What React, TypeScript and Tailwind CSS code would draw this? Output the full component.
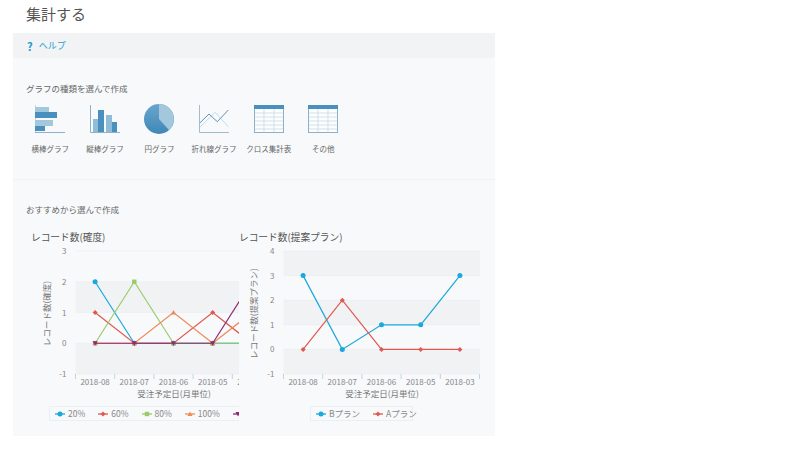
import type { ReactNode } from "react"

type Series = { name: string; color: string; values: number[]; marker: "circle" | "diamond" | "square" | "triangle" | "down" }

const chartA: Series[] = [
  { name: "20%", color: "#1ba8dc", values: [2, 0, 0, 0, 0], marker: "circle" },
  { name: "60%", color: "#e0584f", values: [1, 0, 0, 1, 0], marker: "diamond" },
  { name: "80%", color: "#9bca6a", values: [0, 2, 0, 0, 0], marker: "square" },
  { name: "100%", color: "#f08a55", values: [0, 0, 1, 0, 1], marker: "triangle" },
  // label is off the edge of the panel in the picture
  { name: "", color: "#8e2a72", values: [0, 0, 0, 0, 2], marker: "down" },
]

const chartB: Series[] = [
  { name: "Bプラン", color: "#1ba8dc", values: [3, 0, 1, 1, 3], marker: "circle" },
  { name: "Aプラン", color: "#e0584f", values: [0, 2, 0, 0, 0], marker: "diamond" },
]

const months = ["2018-08", "2018-07", "2018-06", "2018-05", "2018-03"]

function Marker({ x, y, kind, color }: { x: number; y: number; kind: Series["marker"]; color: string }) {
  if (kind === "circle") return <circle cx={x} cy={y} r={2.5} fill={color} />
  if (kind === "square") return <rect x={x - 2.2} y={y - 2.2} width={4.4} height={4.4} fill={color} />
  if (kind === "diamond") return <polygon points={`${x},${y - 2.5} ${x + 2.5},${y} ${x},${y + 2.5} ${x - 2.5},${y}`} fill={color} />
  if (kind === "triangle") return <polygon points={`${x},${y - 2.5} ${x + 2.5},${y + 2} ${x - 2.5},${y + 2}`} fill={color} />
  return <polygon points={`${x},${y + 2.5} ${x + 2.5},${y - 2} ${x - 2.5},${y - 2}`} fill={color} />
}

function LineChart({
  width,
  plotLeft,
  plotRight,
  step,
  top,
  bottom,
  max,
  series,
  axisTitle,
  axisTitleX,
  xTitleX,
}: {
  width: number
  plotLeft: number
  plotRight: number
  step: number
  top: number
  bottom: number
  max: number
  series: Series[]
  axisTitle: string
  axisTitleX: number
  xTitleX: number
}) {
  const ticks: number[] = []
  for (let v = max; v >= -1; v--) ticks.push(v)
  const unit = (bottom - top) / (max + 1)
  const yOf = (v: number) => top + (max - v) * unit
  const xOf = (i: number) => plotLeft + step * (i + 0.5)

  return (
    <svg width={width} height={162} className="block">
      {ticks.slice(0, -1).map((v) =>
        v % 2 === 0 ? <rect key={v} x={plotLeft} y={yOf(v)} width={plotRight - plotLeft} height={unit} fill="#f1f2f4" /> : null
      )}
      {ticks.map((v) => (
        <g key={v}>
          <line x1={plotLeft} x2={plotRight} y1={yOf(v)} y2={yOf(v)} stroke="#ebeef1" strokeWidth={0.7} />
          <text x={plotLeft - 9} y={yOf(v) + 3} textAnchor="end" fontSize={8} fill="#888">
            {v}
          </text>
        </g>
      ))}
      {months.map((m, i) => (
        <g key={m}>
          <line x1={plotLeft + step * i} x2={plotLeft + step * i} y1={bottom} y2={bottom + 5} stroke="#c4d3e0" />
          <text x={xOf(i)} y={bottom + 11} textAnchor="middle" fontSize={8} fill="#888">
            {m}
          </text>
        </g>
      ))}
      <line x1={plotLeft + step * 5} x2={plotLeft + step * 5} y1={bottom} y2={bottom + 5} stroke="#c4d3e0" />
      <text x={xTitleX} y={bottom + 23} textAnchor="middle" fontSize={8.5} fill="#777">
        受注予定日(月単位)
      </text>
      <text
        transform={`translate(${axisTitleX} ${(top + bottom) / 2 + 1}) rotate(-90)`}
        textAnchor="middle"
        fontSize={8.5}
        fill="#777"
      >
        {axisTitle}
      </text>
      {series.map((s) => (
        <g key={s.name}>
          <polyline
            points={s.values.map((v, i) => `${xOf(i)},${yOf(v)}`).join(" ")}
            fill="none"
            stroke={s.color}
            strokeWidth={1.2}
          />
          {s.values.map((v, i) => (
            <Marker key={i} x={xOf(i)} y={yOf(v)} kind={s.marker} color={s.color} />
          ))}
        </g>
      ))}
    </svg>
  )
}

function LegendItem({ s }: { s: Series }) {
  return (
    <span className="flex items-center gap-[3px] whitespace-nowrap">
      <svg width={10} height={8}>
        <line x1={0} x2={10} y1={4} y2={4} stroke={s.color} strokeWidth={1.3} />
        <Marker x={5} y={4} kind={s.marker} color={s.color} />
      </svg>
      {s.name}
    </span>
  )
}

function IconBars() {
  return (
    <svg width={30} height={28} viewBox="0 0 30 28">
      <path d="M0.5 0V27.5" stroke="#c3d6e3" />
      <rect x={0} y={2} width={14} height={5} fill="#a3c8de" />
      <rect x={0} y={7} width={22} height={6} fill="#4a90bf" />
      <rect x={0} y={15} width={18} height={6} fill="#a3c8de" />
      <rect x={0} y={21} width={10} height={5} fill="#4a90bf" />
      <path d="M0 27.5H30" stroke="#8fb0c6" />
    </svg>
  )
}

function IconColumns() {
  return (
    <svg width={30} height={28} viewBox="0 0 30 28">
      <rect x={3} y={14} width={5} height={14} fill="#8fbcd8" />
      <rect x={8} y={5} width={6} height={23} fill="#4a90bf" />
      <rect x={16} y={10} width={6} height={18} fill="#8fbcd8" />
      <rect x={22} y={17} width={5} height={11} fill="#4a90bf" />
      <path d="M0.5 0V27.5H30" fill="none" stroke="#8fb0c6" />
    </svg>
  )
}

function IconPie() {
  return (
    <svg width={30} height={30} viewBox="0 0 30 30" className="mb-[-1px]">
      <defs>
        <linearGradient id="pieDark" x1="0" y1="0" x2="0" y2="1">
          <stop offset="0" stopColor="#6aa6cc" />
          <stop offset="1" stopColor="#3f87b8" />
        </linearGradient>
      </defs>
      <circle cx={15} cy={15} r={15} fill="url(#pieDark)" />
      <path d="M15 15V0A15 15 0 0 1 25 26Z" fill="#a3c8de" />
    </svg>
  )
}

function IconLine() {
  return (
    <svg width={30} height={28} viewBox="0 0 30 28">
      <path d="M0.5 22.7L16 7.3L29.3 21.7" fill="none" stroke="#c3dae8" />
      <path d="M0.5 18.3L10 9L18.3 16.7L29.3 5" fill="none" stroke="#5c93b8" />
      <path d="M0.5 0V27.5H30" fill="none" stroke="#a3bccd" />
    </svg>
  )
}

function IconTable() {
  const rows = [8, 12, 16, 20, 24]
  const cols = [10, 20]
  return (
    <svg width={30} height={28} viewBox="0 0 30 28">
      <rect x={0.5} y={0.5} width={29} height={27} fill="#fcfdfe" stroke="#8fb0c6" />
      {rows.map((y) => (
        <line key={y} x1={1} x2={29} y1={y} y2={y} stroke="#c3d6e3" strokeWidth={0.7} />
      ))}
      {cols.map((x) => (
        <line key={x} x1={x} x2={x} y1={4} y2={27} stroke="#c3d6e3" strokeWidth={0.7} />
      ))}
      <rect x={0} y={0} width={30} height={4} fill="#4a90bf" />
    </svg>
  )
}

const chartTypes: { label: string; icon: ReactNode }[] = [
  { label: "横棒グラフ", icon: <IconBars /> },
  { label: "縦棒グラフ", icon: <IconColumns /> },
  { label: "円グラフ", icon: <IconPie /> },
  { label: "折れ線グラフ", icon: <IconLine /> },
  { label: "クロス集計表", icon: <IconTable /> },
  { label: "その他", icon: <IconTable /> },
]

export default function App() {
  return (
    <div className="h-[449px] w-[789px] overflow-hidden bg-white font-['Noto_Sans_CJK_JP',sans-serif] text-[#666]">
      <h1 className="h-[33px] pl-[26px] pt-[4px] text-[15px] leading-[20px] text-[#555]">集計する</h1>
      <div className="ml-[13px] h-[403px] w-[482px] bg-[#f7f9fb]">
        <div className="flex h-[25px] items-center gap-[6px] bg-[#f1f3f5] pl-[14px] pt-[1px] text-[9px] text-[#2a9fd0]">
          <span className="text-[11px] font-bold leading-none text-[#1b9ad2]">?</span>
          <span>ヘルプ</span>
        </div>
        <div className="h-[122px] border-b border-[#f0f3f5] pt-[24px]">
          <p className="pl-[13px] text-[8.5px] leading-[12px]">グラフの種類を選んで作成</p>
          <div className="mt-[8px] flex pl-[10px]">
            {chartTypes.map((t) => (
              <div key={t.label} className="flex w-[54.6px] flex-col items-center">
                <div className="flex h-[31px] items-end">{t.icon}</div>
                <span className="mt-[11px] whitespace-nowrap text-[7.5px] leading-[10px]">{t.label}</span>
              </div>
            ))}
          </div>
        </div>
        <p className="pl-[13px] pt-[23px] text-[8.5px] leading-[12px]">おすすめから選んで作成</p>
        <div className="mt-[15px] flex pl-[13px]">
          <div className="w-[213px] overflow-hidden">
            <p className="pl-[5px] text-[9.7px] leading-[14px] text-[#555]">レコード数(確度)</p>
            <LineChart
              width={213}
              plotLeft={49.5}
              plotRight={225}
              step={39.2}
              top={7}
              bottom={130}
              max={3}
              series={chartA}
              axisTitle="レコード数(確度)"
              axisTitleX={24}
              xTitleX={148}
            />
            <div className="ml-[23px] flex h-[15px] w-[210px] items-center gap-[13px] border border-[#eceff2] pl-[5px] text-[8.5px] text-[#888]">
              {chartA.map((s) => (
                <LegendItem key={s.name} s={s} />
              ))}
            </div>
          </div>
          <div className="w-[250px]">
            <p className="text-[9.7px] leading-[14px] text-[#555]">レコード数(提案プラン)</p>
            <LineChart
              width={245}
              plotLeft={44.5}
              plotRight={241}
              step={39.2}
              top={7}
              bottom={130}
              max={4}
              series={chartB}
              axisTitle="レコード数(提案プラン)"
              axisTitleX={18}
              xTitleX={143}
            />
            <div className="ml-[71px] flex h-[15px] w-[103px] items-center gap-[13px] border border-[#eceff2] pl-[5px] text-[8.5px] text-[#888]">
              {chartB.map((s) => (
                <LegendItem key={s.name} s={s} />
              ))}
            </div>
          </div>
        </div>
      </div>
    </div>
  )
}
